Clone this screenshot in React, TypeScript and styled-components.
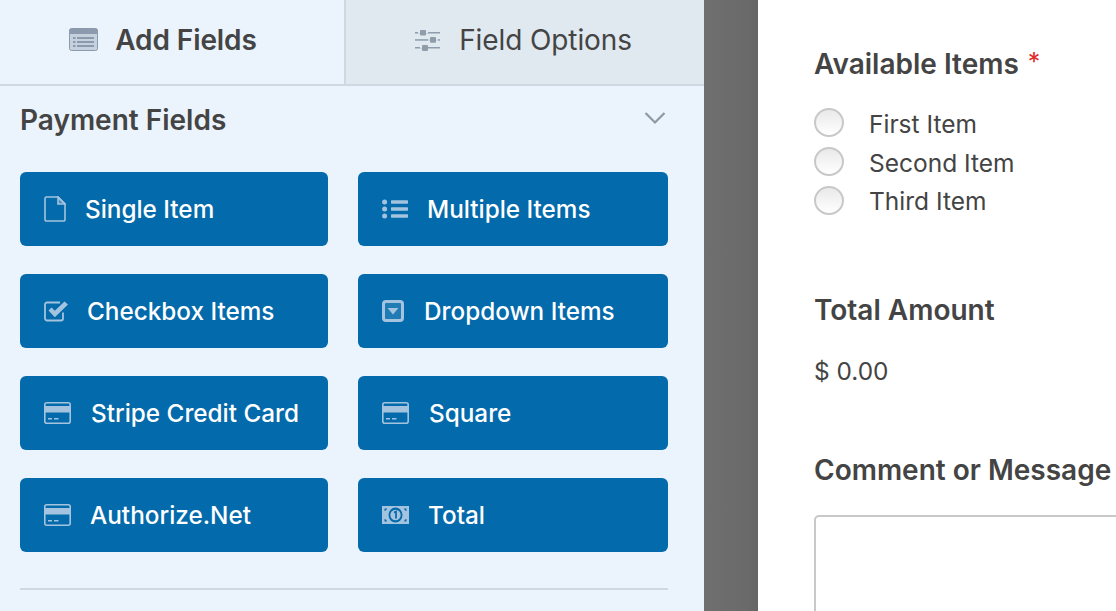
import React from "react";
import styled, { createGlobalStyle } from "styled-components";

const Global = createGlobalStyle`
  html, body { margin: 0; padding: 0; height: 611px; overflow: hidden; background: #fff; }
  * { box-sizing: border-box; }
  body { font-family: Inter, "Liberation Sans", sans-serif; -webkit-font-smoothing: antialiased; }
`;

const Page = styled.div`
  display: grid;
  grid-template-columns: 704px 54px 1fr;
  width: 1116px;
  height: 611px;
  overflow: hidden;
`;
const Panel = styled.div`
  background: #ebf3fc;
  display: flex;
  flex-direction: column;
`;
const Tabs = styled.div`
  display: grid;
  grid-template-columns: 346px 358px;
  height: 86px;
  border-bottom: 2px solid #ced7e2;
`;
const Tab = styled.div<{ $active?: boolean }>`
  display: flex;
  align-items: center;
  justify-content: center;
  gap: ${(p) => (p.$active ? "17px" : "19px")};
  font-size: 28px;
  letter-spacing: -0.1px;
  color: #444;
  font-weight: ${(p) => (p.$active ? 600 : 400)};
  background: ${(p) => (p.$active ? "#ebf3fc" : "#e0e8f0")};
  border-right: ${(p) => (p.$active ? "2px solid #ced7e2" : "none")};
  padding-right: ${(p) => (p.$active ? "18px" : "3px")};
  padding-bottom: 4px;
`;
const Section = styled.div`
  padding: 0 36px 0 20px;
  display: flex;
  flex-direction: column;
`;
const SectionHead = styled.div`
  display: flex;
  align-items: center;
  justify-content: space-between;
  height: 68px;
  font-size: 28px;
  font-weight: 600;
  color: #444;
  padding-bottom: 1px;
  & > svg { margin: 0 2px 3px 0; }
`;
const Grid = styled.div`
  display: grid;
  grid-template-columns: 308px 310px;
  column-gap: 30px;
  row-gap: 28px;
  margin-top: 18px;
`;
const FieldButton = styled.div<{ $gap: number }>`
  display: flex;
  align-items: center;
  height: 74px;
  padding-left: 24px;
  gap: ${(p) => p.$gap}px;
  background: #036aab;
  border-radius: 6px;
  color: #fff;
  font-size: 24.3px;
  font-weight: 500;
`;
const Divider = styled.div`
  height: 2px;
  background: #ced7e2;
  margin-top: 36px;
`;
const Gutter = styled.div`
  background: linear-gradient(90deg, #6f6f6f, #6a6a6a 80%, #656565);
`;
const Form = styled.div`
  background: #fff;
  padding: 45px 0 0 56px;
  display: flex;
  flex-direction: column;
  color: #444;
  white-space: nowrap;
`;
const Label = styled.div`
  font-size: 28px;
  font-weight: 600;
  line-height: 38px;
`;
const Required = styled.span`
  color: #e02b2b;
  font-weight: 400;
  font-size: 25px;
  margin-left: 9px;
  position: relative;
  top: -3px;
`;
const Options = styled.div`
  display: flex;
  flex-direction: column;
  margin-top: 20px;
  margin-bottom: 71px;
`;
const Option = styled.div<{ $h: number }>`
  display: flex;
  align-items: center;
  gap: 25px;
  height: ${(p) => p.$h}px;
  font-size: 24.5px;
`;
const Radio = styled.span`
  width: 30px;
  height: 29px;
  border-radius: 50%;
  border: 2px solid #c8c8c8;
  background: linear-gradient(#e9e9e9, #fff);
  flex: none;
  margin-bottom: 2px;
`;
const Amount = styled.div`
  font-size: 24.4px;
  line-height: 30px;
  margin-top: 27px;
  margin-bottom: 65px;
`;
const TextArea = styled.div`
  width: 400px;
  height: 200px;
  margin-top: 26px;
  border: 2px solid #c8c8c8;
  border-radius: 5px;
  background: #fff;
`;

const FORM_ICON = "#8b9bad";
const FormsIcon = () => (
  <svg width="29" height="24" viewBox="0 0 29 24">
    <rect x="0.5" y="0.5" width="28" height="22" rx="2" fill="#c5d1dd" stroke={FORM_ICON} />
    <path d="M0.5 2.5a2 2 0 0 1 2-2h24a2 2 0 0 1 2 2V6H.5z" fill={FORM_ICON} />
    <g fill={FORM_ICON}>
      <rect x="4" y="9" width="2.5" height="2" /><rect x="4" y="13" width="2.5" height="2" /><rect x="4" y="17" width="2.5" height="2" />
      <rect x="8" y="9" width="17" height="2" /><rect x="8" y="13" width="17" height="2" /><rect x="8" y="17" width="17" height="2" />
    </g>
  </svg>
);
const SlidersIcon = () => (
  <svg width="25" height="24" viewBox="0 0 25 24" fill="#8f9dab">
    <rect x="0" y="4" width="25" height="1.5" /><rect x="0" y="11.2" width="25" height="1.5" /><rect x="0" y="19" width="25" height="1.5" />
    <rect x="5" y="2" width="6" height="5.6" rx="1" /><rect x="15" y="9" width="6" height="5.8" rx="1" /><rect x="7" y="17" width="6" height="6" rx="1" />
    <rect x="3" y="4" width="2" height="1.5" fill="#e0e8f0" /><rect x="11" y="4" width="2" height="1.5" fill="#e0e8f0" />
    <rect x="13" y="11.2" width="2" height="1.5" fill="#e0e8f0" /><rect x="21" y="11.2" width="2" height="1.5" fill="#e0e8f0" />
    <rect x="5" y="19" width="2" height="1.5" fill="#e0e8f0" />
  </svg>
);
const Chevron = () => (
  <svg width="22" height="14" viewBox="0 0 22 14" fill="none" stroke="#8d99a6" strokeWidth="2.2">
    <path d="M1.5 2l9.5 9.5L20.5 2" />
  </svg>
);
const ICON = "#a4c3de";
const FileIcon = () => (
  <svg width="22" height="26" viewBox="0 0 22 26" fill="none" stroke={ICON} strokeWidth="1.6">
    <path d="M14 1H2.5A1.5 1.5 0 0 0 1 2.5v21A1.5 1.5 0 0 0 2.5 25h17a1.5 1.5 0 0 0 1.5-1.5V8z" />
    <path d="M14 1v7h7z" fill={ICON} fillOpacity=".45" />
  </svg>
);
const ListIcon = () => (
  <svg width="26" height="20" viewBox="0 0 26 20" fill={ICON}>
    <circle cx="2.6" cy="3" r="2.5" /><circle cx="2.6" cy="10" r="2.5" /><circle cx="2.6" cy="17" r="2.5" />
    <rect x="9" y="1.3" width="17" height="3.4" rx=".6" /><rect x="9" y="8.3" width="17" height="3.4" rx=".6" /><rect x="9" y="15.3" width="17" height="3.4" rx=".6" />
  </svg>
);
const CheckIcon = () => (
  <svg width="24" height="21" viewBox="0 0 24 21" fill="none">
    <path d="M19 11.5v6a2 2 0 0 1-2 2H3a2 2 0 0 1-2-2v-14a2 2 0 0 1 2-2h13" stroke={ICON} strokeWidth="1.8" />
    <path d="M4.5 9.5L7.5 6.5l3.3 3.3L20.5.6 24 3.6 10.8 16.3z" fill={ICON} />
  </svg>
);
const DropIcon = () => (
  <svg width="22" height="22" viewBox="0 0 22 22">
    <rect x="1.5" y="1.5" width="19" height="19" rx="2.5" fill="#ffffff" fillOpacity=".12" stroke={ICON} strokeWidth="3" />
    <path d="M5.5 8h11L11 14.5z" fill={ICON} />
  </svg>
);
const CardIcon = () => (
  <svg width="27" height="22" viewBox="0 0 27 22">
    <rect x=".8" y=".8" width="25.4" height="20.4" rx="2" fill="none" stroke={ICON} strokeWidth="1.6" />
    <rect x="1" y="4" width="25" height="6.5" fill={ICON} />
    <rect x="4" y="16" width="4" height="1.5" fill={ICON} /><rect x="10" y="16" width="4.5" height="1.5" fill={ICON} />
  </svg>
);
const MoneyIcon = () => (
  <svg width="27" height="18" viewBox="0 0 27 18">
    <path d="M0 0h27v18H0zM5 2.5H2.5V5A3 3 0 0 0 5 2.5zM22 2.5A3 3 0 0 0 24.5 5V2.5zM2.5 13v2.5H5A3 3 0 0 0 2.5 13zM24.5 13A3 3 0 0 0 22 15.5h2.5z" fill={ICON} fillRule="evenodd" />
    <ellipse cx="13.5" cy="9" rx="7" ry="7.4" fill="#036aab" />
    <circle cx="13.5" cy="9" r="5.2" fill={ICON} />
    <path d="M12 6.5l2-.9V12.5" fill="none" stroke="#036aab" strokeWidth="1.7" />
  </svg>
);

const fields = [
  { label: "Single Item", icon: <FileIcon />, gap: 19 },
  { label: "Multiple Items", icon: <ListIcon />, gap: 19 },
  { label: "Checkbox Items", icon: <CheckIcon />, gap: 19 },
  { label: "Dropdown Items", icon: <DropIcon />, gap: 20 },
  { label: "Stripe Credit Card", icon: <CardIcon />, gap: 20 },
  { label: "Square", icon: <CardIcon />, gap: 20 },
  { label: "Authorize.Net", icon: <CardIcon />, gap: 19 },
  { label: "Total", icon: <MoneyIcon />, gap: 19 },
];

export default function App() {
  return (
    <Page>
      <Global />
      <Panel>
        <Tabs>
          <Tab $active><FormsIcon />Add Fields</Tab>
          <Tab><SlidersIcon />Field Options</Tab>
        </Tabs>
        <Section>
          <SectionHead>Payment Fields<Chevron /></SectionHead>
          <Grid>
            {fields.map((f) => (
              <FieldButton key={f.label} $gap={f.gap}>{f.icon}{f.label}</FieldButton>
            ))}
          </Grid>
          <Divider />
        </Section>
      </Panel>
      <Gutter />
      <Form>
        <Label>Available Items<Required>*</Required></Label>
        <Options>
          <Option $h={39}><Radio />First Item</Option>
          <Option $h={39}><Radio />Second Item</Option>
          <Option $h={38}><Radio />Third Item</Option>
        </Options>
        <Label>Total Amount</Label>
        <Amount>$ 0.00</Amount>
        <Label>Comment or Message</Label>
        <TextArea />
      </Form>
    </Page>
  );
}
